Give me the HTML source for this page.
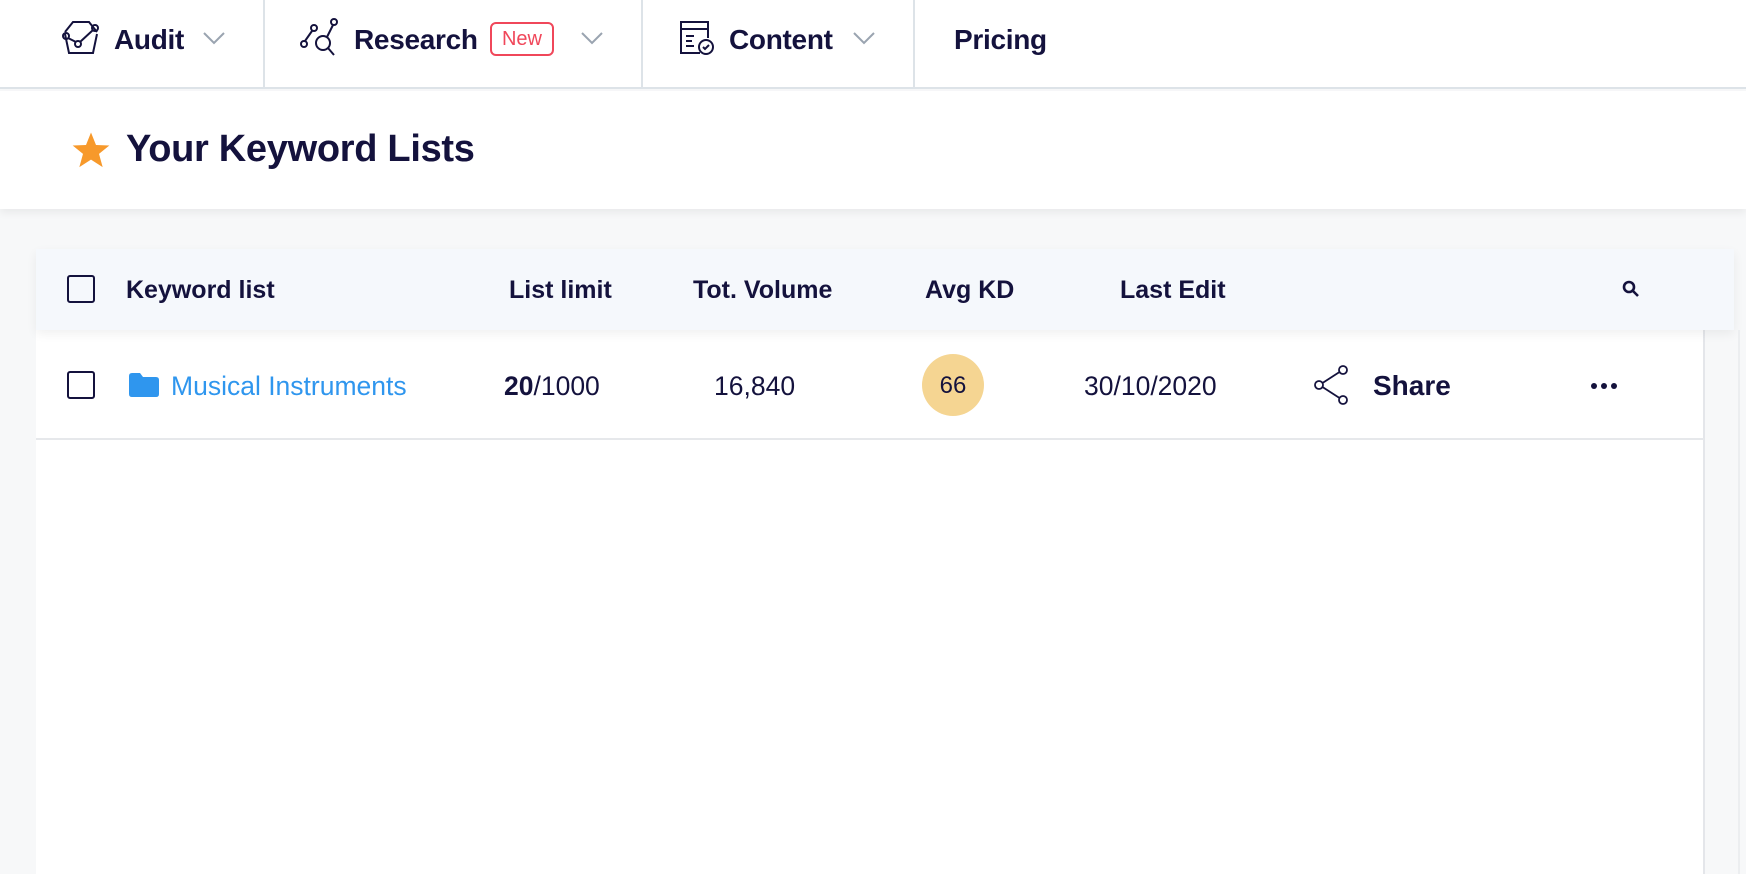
<!DOCTYPE html>
<html><head><meta charset="utf-8"><style>
*{margin:0;padding:0;box-sizing:border-box}
body{width:1746px;height:874px;overflow:hidden;background:#f7f8f9;font-family:"Liberation Sans",Arial,sans-serif;color:#14123d;position:relative}
.abs{position:absolute}
.nav{left:0;top:0;width:1746px;height:89px;background:#fff;border-bottom:2px solid #dde3e8}
.nt{font-size:28px;font-weight:bold;top:24px;letter-spacing:-0.3px}
.div{top:0;width:2px;height:88px;background:#dde3e8}
.chev{top:31px}
.hdr{left:0;top:91px;width:1746px;height:118px;background:#fff;box-shadow:0 4px 8px rgba(0,0,0,0.06)}
.panel{left:36px;top:249px;width:1669px;height:625px;background:#fff;border-right:2px solid #e4e6ea}
.th{left:36px;top:249px;width:1698px;height:81px;background:#f5f8fc;box-shadow:0 4px 10px rgba(0,0,0,0.06)}
.h{font-size:25px;font-weight:bold;top:276px}
.r{font-size:26.5px;top:371px}
.cb{width:28px;height:28px;border:2px solid #14123d;border-radius:3px}
</style></head><body>
<div class="abs nav"></div>
<svg class="abs" style="left:61px;top:20px" width="40" height="36" viewBox="0 0 40 36" fill="none" stroke="#14123d" stroke-width="2"><path d="M4 12 L12 2 L28 2 L36 12"/><path d="M4 14 L8 33 L32 33 L36 14"/><circle cx="5" cy="16" r="3"/><circle cx="17" cy="24" r="3"/><circle cx="34" cy="8" r="3"/><path d="M7 18 L15 22 M19 22 L32 10"/></svg>
<div class="abs nt" style="left:114px">Audit</div>
<svg class="abs chev" style="left:203px" width="22" height="14"><path d="M1 2 L11 12 L21 2" fill="none" stroke="#9aa4b0" stroke-width="2"/></svg>
<div class="abs div" style="left:263px"></div>
<svg class="abs" style="left:300px;top:18px" width="40" height="38" viewBox="0 0 40 38" fill="none" stroke="#14123d" stroke-width="2"><circle cx="4" cy="26" r="3"/><circle cx="14" cy="10" r="3"/><circle cx="34" cy="4" r="3"/><circle cx="23" cy="25" r="7"/><path d="M28 30 L34 37 M5 23 L12 13 M27 19 L33 7"/></svg>
<div class="abs nt" style="left:354px">Research</div>
<div class="abs" style="left:490px;top:22px;width:64px;height:34px;border:2px solid #f0475a;border-radius:6px;color:#f0475a;font-size:20px;text-align:center;line-height:30px">New</div>
<svg class="abs chev" style="left:581px" width="22" height="14"><path d="M1 2 L11 12 L21 2" fill="none" stroke="#9aa4b0" stroke-width="2"/></svg>
<div class="abs div" style="left:641px"></div>
<svg class="abs" style="left:678px;top:20px" width="38" height="36" viewBox="0 0 38 36" fill="none" stroke="#14123d" stroke-width="2"><path d="M22 33 L3 33 L3 2 L30 2 L30 18"/><path d="M3 9 L30 9 M8 16 L16 16 M8 21 L14 21 M8 26 L16 26"/><circle cx="28" cy="27" r="7"/><path d="M25 27 L27 29 L31 25"/></svg>
<div class="abs nt" style="left:729px">Content</div>
<svg class="abs chev" style="left:853px" width="22" height="14"><path d="M1 2 L11 12 L21 2" fill="none" stroke="#9aa4b0" stroke-width="2"/></svg>
<div class="abs div" style="left:913px"></div>
<div class="abs nt" style="left:954px">Pricing</div>

<div class="abs hdr"></div>
<svg class="abs" style="left:71px;top:130px" width="40" height="40" viewBox="0 0 24 24"><path d="M12 1.5 L15 9 L23 9.3 L16.8 14.3 L19 22.3 L12 17.8 L5 22.3 L7.2 14.3 L1 9.3 L9 9 Z" fill="#f7992b"/></svg>
<div class="abs" style="left:126px;top:128px;font-size:38px;font-weight:bold;letter-spacing:-0.3px">Your Keyword Lists</div>

<div class="abs panel"></div>
<div class="abs" style="left:36px;top:438px;width:1668px;height:2px;background:#e6e8eb"></div>
<div class="abs th"></div>
<div class="abs cb" style="left:67px;top:275px"></div>
<div class="abs h" style="left:126px">Keyword list</div>
<div class="abs h" style="left:509px">List limit</div>
<div class="abs h" style="left:693px">Tot. Volume</div>
<div class="abs h" style="left:925px">Avg KD</div>
<div class="abs h" style="left:1120px">Last Edit</div>
<svg class="abs" style="left:1621px;top:279px" width="20" height="20" viewBox="0 0 20 20" fill="none" stroke="#14123d" stroke-width="2.6"><circle cx="8" cy="8" r="5"/><path d="M12 12 L17 17"/></svg>

<div class="abs cb" style="left:67px;top:371px"></div>
<svg class="abs" style="left:129px;top:373px" width="30" height="24" viewBox="0 0 30 24"><path d="M0 3 Q0 0 3 0 L11 0 L14 4 L27 4 Q30 4 30 7 L30 21 Q30 24 27 24 L3 24 Q0 24 0 21 Z" fill="#2f96ee"/></svg>
<div class="abs r" style="left:171px;color:#2f96ee">Musical Instruments</div>
<div class="abs r" style="left:504px"><b>20</b>/1000</div>
<div class="abs r" style="left:714px">16,840</div>
<div class="abs" style="left:922px;top:354px;width:62px;height:62px;border-radius:50%;background:#f5d592;font-size:24px;text-align:center;line-height:64px">66</div>
<div class="abs r" style="left:1084px">30/10/2020</div>
<svg class="abs" style="left:1313px;top:365px" width="38" height="40" viewBox="0 0 38 40" fill="none" stroke="#14123d" stroke-width="1.8"><circle cx="30" cy="5" r="4"/><circle cx="6" cy="20" r="4"/><circle cx="30" cy="35" r="4"/><path d="M9.5 18 L26.5 7 M9.5 22 L26.5 33"/></svg>
<div class="abs r" style="left:1373px;top:370px;font-size:28px;font-weight:bold">Share</div>
<svg class="abs" style="left:1590px;top:382px" width="28" height="8"><circle cx="4" cy="4" r="3" fill="#14123d"/><circle cx="14" cy="4" r="3" fill="#14123d"/><circle cx="24" cy="4" r="3" fill="#14123d"/></svg>
<div class="abs" style="left:1738px;top:330px;width:2px;height:544px;background:#eceef0"></div>
</body></html>
